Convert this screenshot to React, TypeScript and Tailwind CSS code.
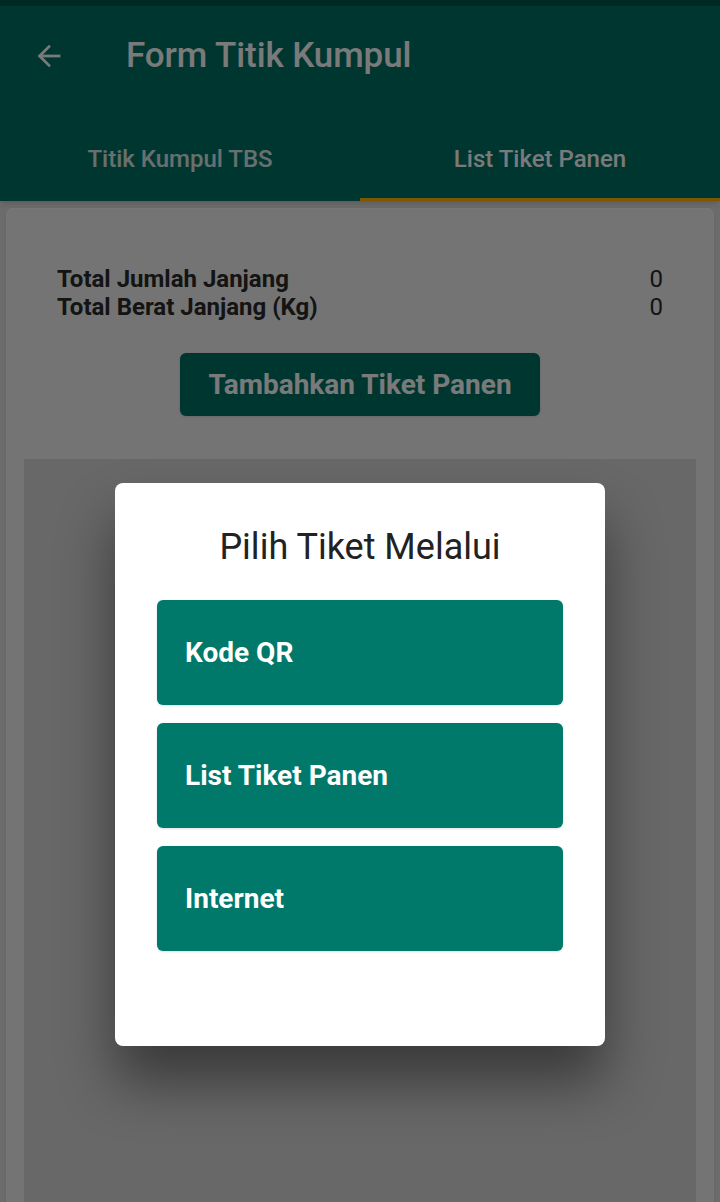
import React from 'react';

const options = ['Kode QR', 'List Tiket Panen', 'Internet'];

const App: React.FC = () => {
  return (
    <div className="relative h-[1202px] w-[720px] overflow-hidden bg-[#e1e1e1] font-['Roboto',sans-serif]">
      {/* Status bar + app bar */}
      <div className="h-[6px] bg-[#00574d]" />
      <header className="bg-[#007264] shadow-md">
        <div className="flex h-[100px] items-center">
          <svg className="ml-[34px] h-[30px] w-[30px]" viewBox="0 0 24 24" fill="none" stroke="#ffffff" strokeWidth="2.2" strokeLinecap="square">
            <path d="M20 12H5" />
            <path d="M12 4.5L4.5 12L12 19.5" />
          </svg>
          <h1 className="ml-[62px] text-[35px] font-medium tracking-[-0.1px] text-white">Form Titik Kumpul</h1>
        </div>
        <div className="flex h-[95px]">
          <div className="flex flex-1 items-center justify-center pt-[11px] text-[24px] font-medium text-white/85">Titik Kumpul TBS</div>
          <div className="flex flex-1 items-center justify-center border-b-[3px] border-[#ffb600] pt-[14px] text-[24px] font-medium text-white">
            List Tiket Panen
          </div>
        </div>
      </header>

      {/* Page content */}
      <main className="px-[6px] pt-[7px]">
        <div className="h-[1000px] rounded-t-[6px] border border-[#f8f8f8] bg-[#f2f2f2] shadow-sm">
          <div className="px-[50px] pt-[56px] text-[24px] leading-[28px] text-[#2a2a2a]">
            <div className="flex justify-between">
              <span className="font-bold">Total Jumlah Janjang</span>
              <span>0</span>
            </div>
            <div className="flex justify-between">
              <span className="font-bold">Total Berat Janjang (Kg)</span>
              <span>0</span>
            </div>
          </div>
          <div className="mt-[32px] flex justify-center">
            <button className="h-[63px] w-[360px] rounded-[6px] bg-[#007264] text-[28px] font-bold text-white shadow">
              Tambahkan Tiket Panen
            </button>
          </div>
          <div className="mx-[17px] mt-[43px] h-[800px] bg-[#d9d9d9]" />
        </div>
      </main>

      {/* Dim overlay */}
      <div className="absolute inset-0 bg-black/[0.52]" />

      {/* Dialog */}
      <div className="absolute left-[115px] top-[483px] w-[490px] rounded-[8px] bg-white px-[42px] pb-[95px] pt-[42px] shadow-[0_36px_56px_rgba(0,0,0,0.45)]">
        <h2 className="text-center text-[36px] leading-[44px] text-[#222]">Pilih Tiket Melalui</h2>
        <div className="mt-[31px] flex flex-col gap-[18px]">
          {options.map((o) => (
            <button
              key={o}
              className="flex h-[105px] items-center rounded-[6px] bg-[#00796b] pl-[28px] text-left text-[28px] font-bold text-white shadow-sm"
            >
              {o}
            </button>
          ))}
        </div>
      </div>
    </div>
  );
};

export default App;
